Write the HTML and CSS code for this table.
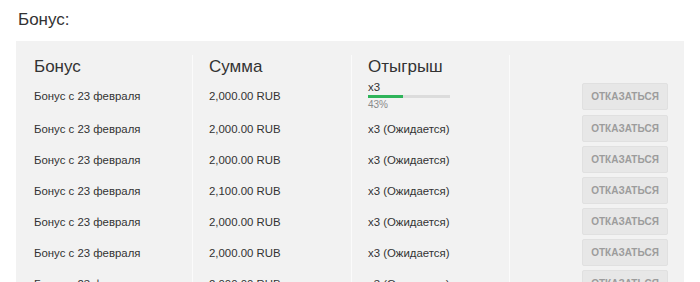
FILE: index.html
```html
<!DOCTYPE html>
<html>

<head>
    <meta charset="utf-8">
    <title>Бонусы</title>
    <link rel="stylesheet" href="styles.css">
</head>

<body>
    <h2 class="title">Бонус:</h2>
    <div class="panel">
        <table class="bonus-table">
            <thead>
                <tr>
                    <th>Бонус</th>
                    <th>Сумма</th>
                    <th>Отыгрыш</th>
                    <th></th>
                </tr>
            </thead>
            <tbody>
                <tr class="active">
                    <td>Бонус с 23 февраля</td>
                    <td>2,000.00 RUB</td>
                    <td>
                        <div class="wager">x3</div>
                        <div class="progress"><div class="progress-fill" style="width: 43%"></div></div>
                        <div class="percent">43%</div>
                    </td>
                    <td class="action"><button class="btn-cancel">Отказаться</button></td>
                </tr>
                <tr>
                    <td>Бонус с 23 февраля</td>
                    <td>2,000.00 RUB</td>
                    <td>x3 (Ожидается)</td>
                    <td class="action"><button class="btn-cancel">Отказаться</button></td>
                </tr>
                <tr>
                    <td>Бонус с 23 февраля</td>
                    <td>2,000.00 RUB</td>
                    <td>x3 (Ожидается)</td>
                    <td class="action"><button class="btn-cancel">Отказаться</button></td>
                </tr>
                <tr>
                    <td>Бонус с 23 февраля</td>
                    <td>2,100.00 RUB</td>
                    <td>x3 (Ожидается)</td>
                    <td class="action"><button class="btn-cancel">Отказаться</button></td>
                </tr>
                <tr>
                    <td>Бонус с 23 февраля</td>
                    <td>2,000.00 RUB</td>
                    <td>x3 (Ожидается)</td>
                    <td class="action"><button class="btn-cancel">Отказаться</button></td>
                </tr>
                <tr>
                    <td>Бонус с 23 февраля</td>
                    <td>2,000.00 RUB</td>
                    <td>x3 (Ожидается)</td>
                    <td class="action"><button class="btn-cancel">Отказаться</button></td>
                </tr>
                <tr>
                    <td>Бонус с 23 февраля</td>
                    <td>2,000.00 RUB</td>
                    <td>x3 (Ожидается)</td>
                    <td class="action"><button class="btn-cancel">Отказаться</button></td>
                </tr>
            </tbody>
        </table>
    </div>
</body>

</html>
```

FILE: styles.css
```css
body {
    font-family: 'Liberation Sans', Arial, sans-serif;
    color: #333333;
    background: #ffffff;
    margin: 0;
    padding: 0 16px;
    overflow: hidden;
}

.title {
    font-size: 17px;
    font-weight: normal;
    margin: 0;
    padding: 10px 0 0 2px;
    height: 41px;
    box-sizing: border-box;
}

.panel {
    background: #f2f2f2;
    padding: 14px 0 0 2px;
}

.bonus-table {
    width: 100%;
    border-collapse: collapse;
    table-layout: fixed;
}

.bonus-table th,
.bonus-table td {
    padding: 2px 16px;
    text-align: left;
    vertical-align: middle;
    border-right: 1px solid #fbfbfb;
}

.bonus-table th:nth-child(1),
.bonus-table td:nth-child(1) {
    width: 142px;
}

.bonus-table th:nth-child(2),
.bonus-table td:nth-child(2) {
    width: 126px;
}

.bonus-table th:nth-child(3),
.bonus-table td:nth-child(3) {
    width: 125px;
}

.bonus-table th:last-child,
.bonus-table td:last-child {
    border-right: none;
}

.bonus-table th {
    font-size: 17px;
    font-weight: normal;
    height: 20px;
    padding-top: 2px;
}

.bonus-table td {
    font-size: 11.4px;
    height: 27px;
}

.bonus-table tr.active td {
    height: 30px;
}

.wager {
    line-height: 13px;
}

.progress {
    width: 82px;
    height: 3px;
    background: #dcdcdc;
    margin: 1px 0 1px;
}

.progress-fill {
    height: 100%;
    background: #2fb45a;
}

.percent {
    font-size: 10px;
    color: #8a8a8a;
    line-height: 12px;
}

.action {
    text-align: right !important;
}

.btn-cancel {
    font-family: 'Liberation Sans', Arial, sans-serif;
    font-size: 10px;
    font-weight: bold;
    text-transform: uppercase;
    color: #9c9c9c;
    background: #e7e7e7;
    border: 1px solid #e0e0e0;
    border-radius: 2px;
    width: 86px;
    height: 27px;
    padding: 0;
}
```
